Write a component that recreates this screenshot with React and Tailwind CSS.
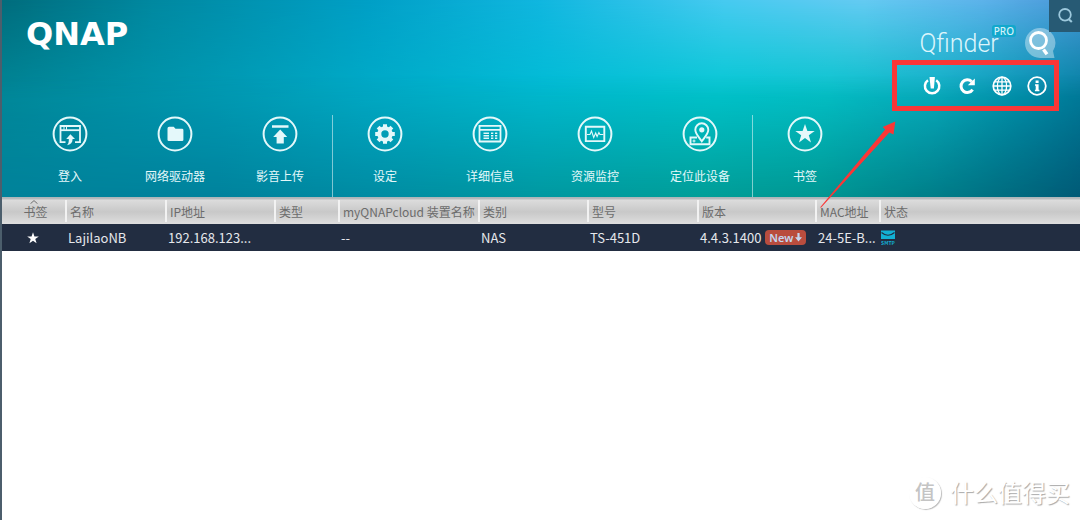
import React from "react";

const ring = <circle cx="18" cy="18" r="16.4" fill="none" stroke="currentColor" strokeWidth="2" />;

const glyphs = {
  login: (
    <g fill="none" stroke="currentColor" strokeWidth="1.8">
      <path d="M13.500 26.200H8.500V10h19.500v16.200h-5" />
      <path d="M8.500 14.200h19.500" />
      <path d="M12 10.800v3M14.500 10.800v3" strokeWidth="1" />
      <path d="M18.400 18.200l4.600 4.900h-2.400c0 3.600-2 5.600-5.600 6.200 1.600-1.700 1.900-3.400 1.800-6.200h-2.600z" fill="currentColor" stroke="none" />
    </g>
  ),
  folder: <path d="M10.500 12.600q0-1.800 1.600-1.800h4.600l1.800 1.900h6.500q1.400 0 1.400 1.400v9.700q0 1.300-1.300 1.300H11.800q-1.300 0-1.300-1.300z" fill="currentColor" />,
  upload: <path d="M10 9.200h16.500v2.600H10zM18.200 13.500l7 7.600h-3.400v6.500h-7.200v-6.500h-3.400z" fill="currentColor" />,
  gear: (
    <g>
      <circle cx="18" cy="18" r="5.700" fill="none" stroke="currentColor" strokeWidth="4" />
      <g stroke="currentColor" strokeWidth="4">
        <path d="M18 8.200v3.500M18 24.300v3.500M8.200 18h3.500M24.300 18h3.500M11.100 11.100l2.300 2.300M22.600 22.600l2.300 2.300M11.100 24.900l2.300-2.300M22.600 13.400l2.300-2.300" />
      </g>
    </g>
  ),
  table: (
    <g fill="none" stroke="currentColor" strokeWidth="1.800">
      <path d="M7.500 9.800h21v15.700h-21zM7.500 13.800h21" />
      <path d="M11.500 17.200h5.500M11.500 19.700h5.500M11.500 22.200h5.500M19 17.200h2.300M19 19.700h2.300M19 22.200h2.300M23 17.200h2.300M23 19.700h2.300M23 22.200h2.300" strokeWidth="1.600" />
    </g>
  ),
  monitor: (
    <g fill="none" stroke="currentColor" strokeWidth="1.900">
      <path d="M8.800 10.700h18.500v14.400H8.800z" />
      <path d="M10 18.500h3l1.500-3.500 2.200 6.500 2-4.500 1.400 3.500 1.800-4 1 2h3.500" strokeWidth="1.100" />
    </g>
  ),
  locate: (
    <g fill="none" stroke="currentColor" strokeWidth="1.900">
      <path d="M15 21.500H8.500v6.700h19v-6.700h-3.300" />
      <path d="M19.800 25.300c-3-4.500-6.500-7.500-6.500-11.500a6.500 6.500 0 0 1 13 0c0 4-3.500 7-6.500 11.500z" />
      <circle cx="19.800" cy="13.800" r="2.600" fill="currentColor" stroke="none" />
      <path d="M12 23.500v3M10.500 25h3" strokeWidth="1" />
    </g>
  ),
  star: <path d="M18 8l2.400 7h7.300l-5.900 4.300 2.200 7.100L18 22.100l-6 4.300 2.200-7.100L8.300 15h7.300z" fill="currentColor" />,
};

const tools = [
  { icon: "login", label: "登入" },
  { icon: "folder", label: "网络驱动器" },
  { icon: "upload", label: "影音上传" },
  { icon: "gear", label: "设定", divided: true },
  { icon: "table", label: "详细信息" },
  { icon: "monitor", label: "资源监控" },
  { icon: "locate", label: "定位此设备" },
  { icon: "star", label: "书签", divided: true },
];

function ToolButton({ icon, label, divided }) {
  return (
    <button
      type="button"
      className={`flex w-[105px] shrink-0 flex-col items-center border-l pt-px text-[#e4f8fa] ${divided ? "border-white/50" : "border-transparent"}`}
    >
      <svg viewBox="0 0 36 36" className="size-9" aria-hidden="true">
        {ring}
        {glyphs[icon]}
      </svg>
      <span className="mt-[17px] text-xs leading-4">{label}</span>
    </button>
  );
}

function QuickActions() {
  const item = "block size-5 text-white";
  return (
    <div className="relative flex h-[51px] w-[167px] items-center justify-end gap-[15px] border-[5px] border-[#fb3636] pr-[7px]">
      <button type="button" aria-label="电源" className={item}>
        <svg viewBox="0 0 20 20" fill="none" stroke="currentColor">
          <path d="M6 4.200a7.200 7.200 0 1 0 8.200 0" strokeWidth="2.500" />
          <path d="M7.500 1h5.400l-1 11.500H8.700z" fill="currentColor" stroke="none" />
        </svg>
      </button>
      <button type="button" aria-label="刷新" className={item}>
        <svg viewBox="0 0 20 20" fill="none" stroke="currentColor">
          <path d="M15.600 13.600a6.300 6.300 0 1 1-.9-8" strokeWidth="3" />
          <path d="M17.800 2.500v6.700h-7z" fill="currentColor" stroke="none" />
        </svg>
      </button>
      <button type="button" aria-label="语言" className={item}>
        <svg viewBox="0 0 20 20" fill="none" stroke="currentColor" strokeWidth="1.300">
          <circle cx="10" cy="10" r="8.800" strokeWidth="1.700" />
          <ellipse cx="10" cy="10" rx="4.600" ry="8.800" />
          <path d="M10 1v18M1 10h18M2.500 5.800h15M2.500 14.200h15" />
        </svg>
      </button>
      <button type="button" aria-label="关于" className={item}>
        <svg viewBox="0 0 20 20" fill="none" stroke="currentColor">
          <circle cx="10" cy="10" r="8.800" strokeWidth="1.800" />
          <path d="M8.600 4.500h3v2.500h-3zM8 8.300h3.600v5.400h.8v1.500H7.900v-1.500h.8V9.800H8z" fill="currentColor" stroke="none" />
        </svg>
      </button>
      <svg viewBox="0 0 80 90" className="pointer-events-none absolute -left-[79px] top-[55px] z-10 h-[90px] w-[80px]" aria-hidden="true">
        <path d="M77.300 1.500L64.700 7l2.500 2.500L2 87.500h1.200L71.300 12.500l4.200 2z" fill="#fb3636" />
      </svg>
    </div>
  );
}

function Header() {
  return (
    <header className="relative isolate flex flex-col">
      <div className="absolute inset-0 -z-10 bg-[linear-gradient(97deg,#008797_0%,#009bb4_20%,#00acc8_34%,#00bdd5_50%,#00c8d2_66%,#04c4cc_76%,#08b0c2_86%,#0092ae_94%,#007c9c_100%)]" />
      <div className="absolute inset-0 -z-10 bg-[linear-gradient(90deg,#006c7c_0%,#0088a0_14%,#009fc6_34%,#10b6df_50%,#46caf0_67%,#64caf2_80%,#5cb2ea_91%,#4896d6_100%)] [mask-image:linear-gradient(180deg,#000_0%,transparent_50%)]" />
      <div className="absolute inset-0 -z-10 bg-[linear-gradient(90deg,#00829a_0%,#00829c_20%,#008ba2_34%,#0098a0_50%,#009e98_65%,#009692_76%,#007c88_87%,#005a76_100%)] [mask-image:linear-gradient(180deg,transparent_38%,#000_100%)]" />
      <div className="flex h-[115px] items-start justify-between">
        <h1 className="pl-6 pt-[18px] font-['DejaVu_Sans',sans-serif] text-[32px] font-bold leading-8 text-white">QNAP</h1>
        <div className="flex flex-col items-end pr-[21px] pt-6">
          <div className="flex h-9 items-start pr-[3px]">
            <span className="pt-1 font-[Roboto,sans-serif] text-[25px] font-light leading-8 text-[#dcf5fb]">Qfinder</span>
            <span className="-ml-[7px] mt-px rounded-[3px] bg-[#12a8cc] px-[2px] font-['Noto_Sans',sans-serif] text-[10px] font-medium leading-3 text-[#d4f2fa]">PRO</span>
            <svg viewBox="0 0 32 32" className="ml-2 mt-[3px] size-8" fill="none" aria-hidden="true">
              <path d="M16 1a15 15 0 1 0 0 30h14.500l-1.500-7A15 15 0 0 0 16 1z" fill="#fff" fillOpacity=".38" />
              <circle cx="14.500" cy="13.500" r="8" stroke="#fff" strokeWidth="2.800" />
              <path d="M19.500 22.500l3.500 4.800" stroke="#fff" strokeWidth="3.400" />
            </svg>
          </div>
          <QuickActions />
        </div>
      </div>
      <nav className="flex h-[82px] pl-[15px]" aria-label="工具">
        {tools.map((tool) => (
          <ToolButton key={tool.icon} {...tool} />
        ))}
      </nav>
      <button type="button" aria-label="搜索" className="absolute right-0 top-0 flex h-8 w-[31px] items-center justify-center bg-[#275a74] text-[#9cc8dc]">
        <svg viewBox="0 0 16 16" className="size-4" fill="none" stroke="currentColor" strokeWidth="1.800" aria-hidden="true">
          <circle cx="8" cy="6.800" r="5.800" />
          <path d="M11.500 11l3.300 3" strokeWidth="2.200" />
        </svg>
      </button>
    </header>
  );
}

const columns = ["名称", "IP地址", "类型", "myQNAPcloud 装置名称", "类别", "型号", "版本", "MAC地址", "状态"];
const cell = "truncate pl-[3px] text-left font-normal";

function DeviceTable() {
  return (
    <table className="w-full table-fixed border-separate border-spacing-0 font-['Noto_Sans_CJK_SC',sans-serif]">
      <colgroup>
        <col className="w-[63px]" />
        <col className="w-[100px]" />
        <col className="w-[109px]" />
        <col className="w-[64px]" />
        <col className="w-[140px]" />
        <col className="w-[109px]" />
        <col className="w-[110px]" />
        <col className="w-[118px]" />
        <col className="w-[64px]" />
        <col />
      </colgroup>
      <thead>
        <tr className="h-[27px] bg-[linear-gradient(180deg,#a9b4b9_0px,#b8bcbe_2px,#dcdcdc_3px,#c8c8c8_55%,#dedede_100%)] text-xs text-[#6c6c6c]">
          <th scope="col" aria-sort="ascending" className="relative pl-1 pt-[3px] text-center font-normal">
            <svg viewBox="0 0 8 4" className="absolute left-7 top-[3px] h-1 w-2" fill="none" stroke="#707070" aria-hidden="true">
              <path d="M.5 3.700L4 .6l3.500 3.100" />
            </svg>
            书签
          </th>
          {columns.map((name) => (
            <th
              key={name}
              scope="col"
              className="whitespace-nowrap bg-[linear-gradient(#f2f2f2,#f2f2f2)] bg-[length:2px_22px] bg-[position:0_3px] bg-no-repeat pl-[5px] pt-[3px] text-left font-normal"
            >
              {name}
            </th>
          ))}
        </tr>
      </thead>
      <tbody>
        <tr className="h-[27px] bg-[#222d41] text-[13px] text-[#e6e8ec]">
          <td>
            <svg viewBox="8 8 20 19" className="ml-[25px] size-3 text-white" role="img" aria-label="已加书签">
              {glyphs.star}
            </svg>
          </td>
          <td className={cell}>LajilaoNB</td>
          <td className={cell}>192.168.123...</td>
          <td />
          <td className={cell}>--</td>
          <td className={cell}>NAS</td>
          <td className={cell}>TS-451D</td>
          <td className={cell}>
            <div className="flex items-center gap-1">
              4.4.3.1400
              <span className="flex h-[15px] items-center gap-[2px] rounded bg-[#b94d3e] px-1 font-['Noto_Sans',sans-serif] text-[11px] font-semibold leading-none text-[#c4d6f0]">
                New
                <svg viewBox="0 0 7 9" className="h-[9px] w-[7px]" aria-hidden="true">
                  <path d="M2.400 0h2.200v4.200H7L3.500 8.500 0 4.200h2.400z" fill="#c4d6f0" />
                </svg>
              </span>
            </div>
          </td>
          <td className={cell}>24-5E-B...</td>
          <td className="pl-[2px]">
            <svg viewBox="0 0 14 15" className="block h-[15px] w-[14px]" role="img" aria-label="SMTP">
              <path d="M0 .5h14v8.500H0z" fill="#12b0d4" />
              <path d="M.5 2.500q6.500 5.500 13 0" fill="none" stroke="#222d41" strokeWidth="1.200" />
              <text x="7" y="14.500" textAnchor="middle" fontSize="5" fontWeight="700" fill="#12b0d4">SMTP</text>
            </svg>
          </td>
        </tr>
      </tbody>
    </table>
  );
}

export default function App() {
  return (
    <div className="relative flex min-h-screen flex-col border-l-2 border-[#4c5e6c] bg-white font-['Noto_Sans','Noto_Sans_CJK_SC',sans-serif]">
      <Header />
      <DeviceTable />
      <div className="absolute bottom-[11px] right-[10px] flex items-center gap-[9px]">
        <span className="flex size-8 items-center justify-center rounded-full border border-white text-[20px] font-medium leading-none text-[#c4c4c4] shadow-[1px_1px_1px_#bdbdbd]">值</span>
        <span className="text-[24px] leading-8 text-white [text-shadow:1px_1px_1px_#a8a8a8]">什么值得买</span>
      </div>
    </div>
  );
}
